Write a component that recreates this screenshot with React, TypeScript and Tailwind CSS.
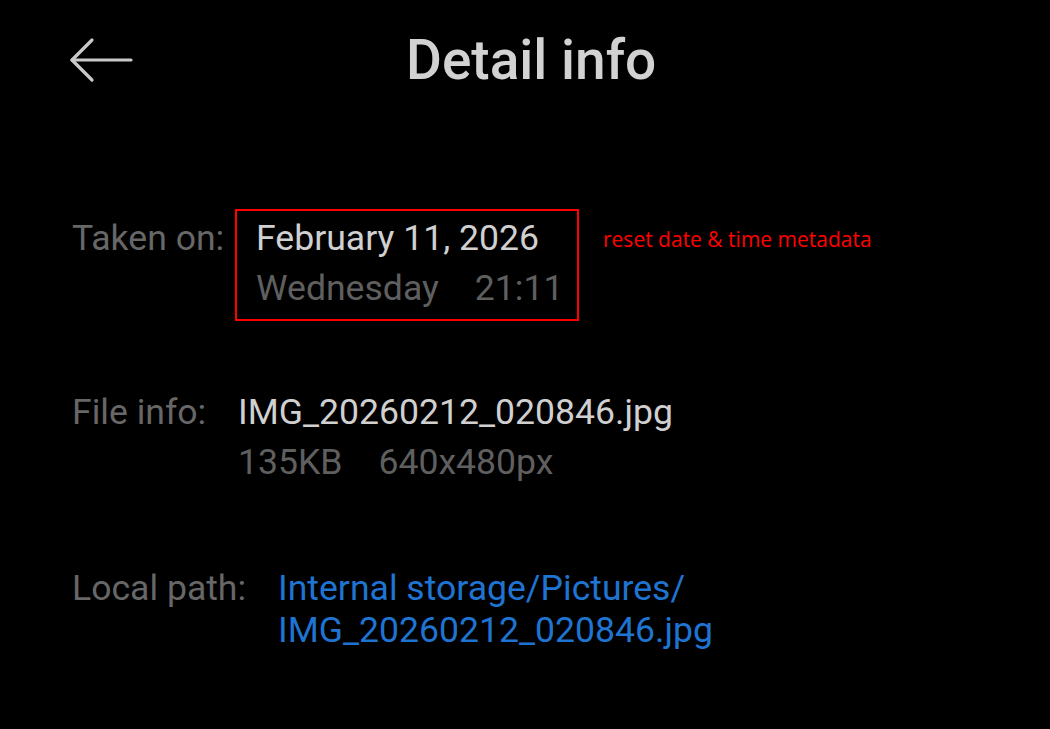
export default function App() {
  return (
    <div
      className="min-h-[729px] w-full bg-black"
      style={{ fontFamily: "Roboto, 'Liberation Sans', sans-serif" }}
    >
      {/* header */}
      <div className="relative flex h-[120px] items-center">
        <svg
          className="ml-[69px]"
          width="64"
          height="46"
          viewBox="0 0 64 46"
          fill="none"
          stroke="#c9c9c9"
          strokeWidth="3.2"
          strokeLinecap="round"
          strokeLinejoin="round"
        >
          <path d="M3 23 H62" />
          <path d="M23 3 L3 23 L23 43" />
        </svg>
        <h1 className="absolute left-[406px] text-[55px] font-medium text-[#d2d2d2]">
          Detail info
        </h1>
      </div>

      <div className="pl-[72px] pt-[89px] text-[35.6px]">
        {/* taken on */}
        <div className="flex items-start">
          <div className="w-[163px] pt-[4px] leading-[50px] text-[#676767]">Taken on:</div>
          <div className="w-[344px] border-2 border-[#ff0000] pb-[6px] pl-[19px] pt-[2px] leading-[50px]">
            <div className="text-[#d0d0d0]">February 11, 2026</div>
            <div className="flex gap-[36px] text-[#5f5f5f]">
              <span>Wednesday</span>
              <span>21:11</span>
            </div>
          </div>
          <div
            className="ml-[24px] pt-[17px] text-[21px] leading-[26px] text-[#ff0000]"
            style={{ fontFamily: "'Open Sans', 'Noto Sans', sans-serif" }}
          >
            reset date &amp; time metadata
          </div>
        </div>

        {/* file info */}
        <div className="mt-[66px] flex items-start leading-[50px]">
          <div className="w-[166px] text-[#676767]">File info:</div>
          <div>
            <div className="text-[#d0d0d0]">IMG_20260212_020846.jpg</div>
            <div className="flex gap-[36px] text-[#5f5f5f]">
              <span>135KB</span>
              <span>640x480px</span>
            </div>
          </div>
        </div>

        {/* local path */}
        <div className="mt-[80px] flex items-start leading-[42px]">
          <div className="w-[206px] text-[#676767]">Local path:</div>
          <div className="text-[#1f74d2]">
            <div>Internal storage/Pictures/</div>
            <div>IMG_20260212_020846.jpg</div>
          </div>
        </div>
      </div>
    </div>
  );
}
